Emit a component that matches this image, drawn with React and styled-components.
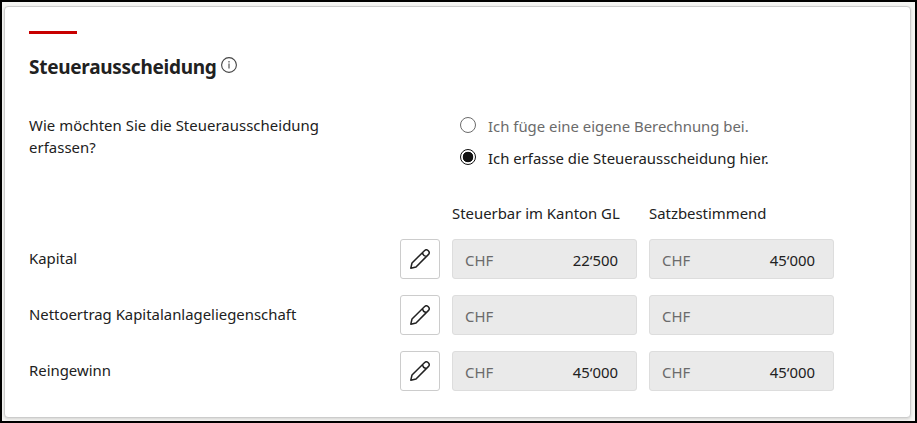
import React, { useState } from "react";
import styled, { createGlobalStyle } from "styled-components";

const rows = [
  { label: "Kapital", kanton: "22‘500", satz: "45‘000" },
  { label: "Nettoertrag Kapitalanlageliegenschaft", kanton: "", satz: "" },
  { label: "Reingewinn", kanton: "45‘000", satz: "45‘000" },
];

function InfoIcon() {
  return (
    <svg width="16" height="16" viewBox="0 0 16 16" fill="none">
      <circle cx="8" cy="8" r="7.4" stroke="#444" strokeWidth="1.1" />
      <path d="M8 6.5v5" stroke="#777" strokeWidth="1.5" />
      <path d="M8 4v1.4" stroke="#777" strokeWidth="1.5" />
    </svg>
  );
}

function PencilIcon() {
  return (
    <svg width="20" height="20" viewBox="0 0 20 20" fill="none">
      <path
        d="M0.8 19.2L2 14L14.4 1.7A2.75 2.75 0 0 1 18.3 5.6L6 18ZM12.6 3.6C12.8 5.8 14.2 7.2 16.4 7.5"
        stroke="#222"
        strokeWidth="1.5"
        strokeLinejoin="round"
      />
    </svg>
  );
}

function AmountField({ value }) {
  return (
    <Field>
      <Currency>CHF</Currency>
      <Amount>{value}</Amount>
    </Field>
  );
}

function App() {
  const [mode, setMode] = useState("erfassen");

  return (
    <Frame>
      <GlobalStyle />
      <Card>
        <Accent />
        <TitleRow>
          <Title>Steuerausscheidung</Title>
          <InfoIcon />
        </TitleRow>
        <Question>
          <QuestionText>
            Wie möchten Sie die Steuerausscheidung erfassen?
          </QuestionText>
          <Options>
            <Option $muted>
              <Radio
                name="mode"
                checked={mode === "eigene"}
                onChange={() => setMode("eigene")}
                $muted
              />
              <OptionText>Ich füge eine eigene Berechnung bei.</OptionText>
            </Option>
            <Option>
              <Radio
                name="mode"
                checked={mode === "erfassen"}
                onChange={() => setMode("erfassen")}
              />
              <OptionText>Ich erfasse die Steuerausscheidung hier.</OptionText>
            </Option>
          </Options>
        </Question>
        <HeadRow>
          <span>Steuerbar im Kanton GL</span>
          <span>Satzbestimmend</span>
        </HeadRow>
        <Rows>
          {rows.map((row) => (
            <Row key={row.label}>
              <Label>{row.label}</Label>
              <EditButton aria-label="Bearbeiten">
                <PencilIcon />
              </EditButton>
              <AmountField value={row.kanton} />
              <AmountField value={row.satz} />
            </Row>
          ))}
        </Rows>
      </Card>
    </Frame>
  );
}

export default App;

//Styles
const GlobalStyle = createGlobalStyle`
  * {
    box-sizing: border-box;
  }
  body {
    margin: 0;
    color: #212121;
    font-family: "Noto Sans", "Open Sans", sans-serif;
    font-size: 14.9px;
    line-height: 22px;
  }
`;
const Frame = styled.div`
  height: 423px;
  padding: 4px 4px 3px 2px;
  border: 2px solid #000;
  background: #f5f5f3;
`;
const Card = styled.section`
  height: 412px;
  padding: 24px;
  border: 1px solid #ccc;
  border-radius: 4px;
  background: #fff;
  box-shadow: 0 1px 3px rgba(0, 0, 0, 0.15);
`;
const Accent = styled.div`
  width: 48px;
  height: 3px;
  background: #c80000;
`;
const TitleRow = styled.div`
  display: flex;
  align-items: flex-start;
  gap: 4px;
  height: 28px;
  margin-top: 19px;

  svg {
    margin-top: 4px;
  }
`;
const Title = styled.h2`
  width: 188px;
  margin: 0;
  font-size: 19px;
  line-height: 28px;
  font-weight: 700;
  letter-spacing: -0.28px;
`;
const Question = styled.div`
  display: grid;
  grid-template-columns: 431px 1fr;
  margin-top: 33px;
`;
const QuestionText = styled.div`
  width: 320px;
  letter-spacing: 0.05px;
`;
const Options = styled.div`
  display: flex;
  flex-direction: column;
  gap: 10px;
`;
const Option = styled.label`
  display: flex;
  align-items: center;
  gap: 12px;
  height: 22px;
  color: ${({ $muted }) => ($muted ? "#6b6b6b" : "#212121")};
`;
const Radio = styled.input.attrs({ type: "radio" })`
  appearance: none;
  flex: none;
  width: 16px;
  height: 16px;
  margin: 0;
  border: 1px solid ${({ $muted }) => ($muted ? "#6b6b6b" : "#111")};
  border-radius: 50%;
  background: #fff;

  &:checked {
    background: radial-gradient(circle, #111 5px, #fff 5.6px);
  }
`;
const OptionText = styled.span`
  white-space: nowrap;
  padding-top: 2px;
`;
const HeadRow = styled.div`
  display: grid;
  grid-template-columns: 185px 185px;
  gap: 12px;
  margin-top: 34px;
  padding-left: 423px;
  white-space: nowrap;
`;
const Rows = styled.div`
  display: flex;
  flex-direction: column;
  gap: 16px;
  margin-top: 15px;
`;
const Row = styled.div`
  display: grid;
  grid-template-columns: 359px 40px 185px 185px;
  gap: 12px;
  height: 40px;
`;
const Label = styled.div`
  padding-top: 8px;
`;
const EditButton = styled.button`
  display: flex;
  align-items: center;
  justify-content: center;
  padding: 0;
  border: 1px solid #ccc;
  border-radius: 3px;
  background: #fff;
`;
const Field = styled.div`
  display: flex;
  align-items: center;
  justify-content: space-between;
  padding: 2px 18px 0 12px;
  border: 1px solid #ddd;
  border-radius: 3px;
  background: #eaeaea;
`;
const Currency = styled.span`
  color: #6b6b6b;
`;
const Amount = styled.span`
  color: #212121;
`;
